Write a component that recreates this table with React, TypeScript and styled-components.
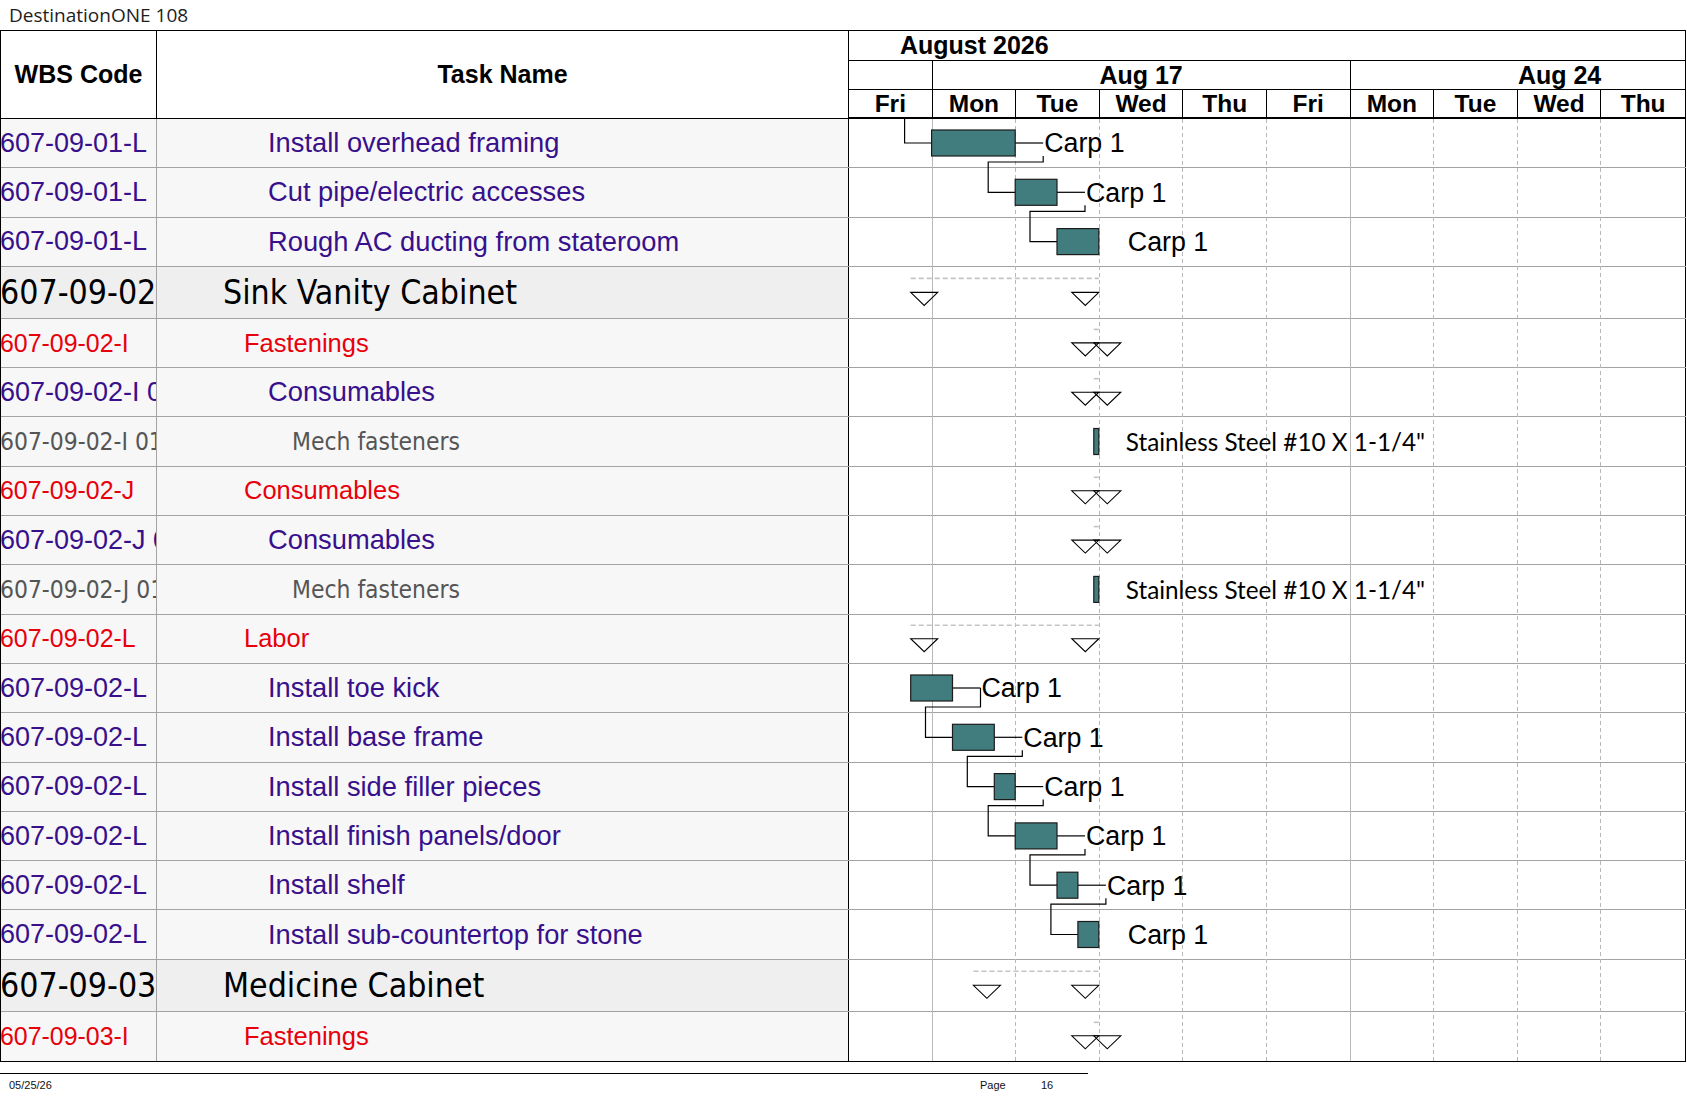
import React from "react";
import styled, { createGlobalStyle } from "styled-components";

const ARIAL = '"Liberation Sans", Arial, sans-serif';
const TAHOMA = '"DejaVu Sans Condensed", "DejaVu Sans", sans-serif';
const CALIBRI = 'Lato, "Open Sans", sans-serif';

const DAY = 83.6;
const ROW_H = 49.3;
const SUM_H = 52;
const CHART_W = 836;

type Level = "summary" | "group" | "task" | "item";

interface Row {
  wbs: string;
  name: string;
  level: Level;
}

const LEVELS: Record<
  Level,
  { color: string; family: string; size: number; wbsSize: number; indent: number; bg: string }
> = {
  summary: { color: "#000", family: TAHOMA, size: 33.6, wbsSize: 33.6, indent: 66, bg: "#efefef" },
  group: { color: "#e8000b", family: ARIAL, size: 25.5, wbsSize: 24.9, indent: 87, bg: "#f7f7f7" },
  task: { color: "#38108c", family: ARIAL, size: 27.3, wbsSize: 27, indent: 111, bg: "#f7f7f7" },
  item: { color: "#555", family: TAHOMA, size: 24.4, wbsSize: 24.4, indent: 135, bg: "#f7f7f7" },
};

const rows: Row[] = [
  { wbs: "607-09-01-L", name: "Install overhead framing", level: "task" },
  { wbs: "607-09-01-L", name: "Cut pipe/electric accesses", level: "task" },
  { wbs: "607-09-01-L", name: "Rough AC ducting from stateroom", level: "task" },
  { wbs: "607-09-02", name: "Sink Vanity Cabinet", level: "summary" },
  { wbs: "607-09-02-I", name: "Fastenings", level: "group" },
  { wbs: "607-09-02-I 01", name: "Consumables", level: "task" },
  { wbs: "607-09-02-I 01 01", name: "Mech fasteners", level: "item" },
  { wbs: "607-09-02-J", name: "Consumables", level: "group" },
  { wbs: "607-09-02-J 01", name: "Consumables", level: "task" },
  { wbs: "607-09-02-J 01 01", name: "Mech fasteners", level: "item" },
  { wbs: "607-09-02-L", name: "Labor", level: "group" },
  { wbs: "607-09-02-L", name: "Install toe kick", level: "task" },
  { wbs: "607-09-02-L", name: "Install base frame", level: "task" },
  { wbs: "607-09-02-L", name: "Install side filler pieces", level: "task" },
  { wbs: "607-09-02-L", name: "Install finish panels/door", level: "task" },
  { wbs: "607-09-02-L", name: "Install shelf", level: "task" },
  { wbs: "607-09-02-L", name: "Install sub-countertop for stone", level: "task" },
  { wbs: "607-09-03", name: "Medicine Cabinet", level: "summary" },
  { wbs: "607-09-03-I", name: "Fastenings", level: "group" },
];

type Bar = { row: number; start: number; end: number; label: string; connector: boolean; material?: boolean };
type Span = { row: number; start: number; end: number };

const STEEL = 'Stainless Steel #10 X 1-1/4"';

const bars: Bar[] = [
  { row: 0, start: 1, end: 2, label: "Carp 1", connector: true },
  { row: 1, start: 2, end: 2.5, label: "Carp 1", connector: true },
  { row: 2, start: 2.5, end: 3, label: "Carp 1", connector: false },
  { row: 6, start: 2.94, end: 3, label: STEEL, connector: false, material: true },
  { row: 9, start: 2.94, end: 3, label: STEEL, connector: false, material: true },
  { row: 11, start: 0.75, end: 1.25, label: "Carp 1", connector: true },
  { row: 12, start: 1.25, end: 1.75, label: "Carp 1", connector: true },
  { row: 13, start: 1.75, end: 2, label: "Carp 1", connector: true },
  { row: 14, start: 2, end: 2.5, label: "Carp 1", connector: true },
  { row: 15, start: 2.5, end: 2.75, label: "Carp 1", connector: true },
  { row: 16, start: 2.75, end: 3, label: "Carp 1", connector: false },
];

const spans: Span[] = [
  { row: 3, start: 0.75, end: 3 },
  { row: 4, start: 2.94, end: 3 },
  { row: 5, start: 2.94, end: 3 },
  { row: 7, start: 2.94, end: 3 },
  { row: 8, start: 2.94, end: 3 },
  { row: 10, start: 0.75, end: 3 },
  { row: 17, start: 1.5, end: 3 },
  { row: 18, start: 2.94, end: 3 },
];

// [from row, to row, line leaves from the bar centre]
const links: [number, number, boolean][] = [
  [0, 1, false],
  [1, 2, false],
  [11, 12, true],
  [12, 13, false],
  [13, 14, false],
  [14, 15, false],
  [15, 16, false],
];

const heights = rows.map((r) => (r.level === "summary" ? SUM_H : ROW_H));
const tops = heights.map((_, i) => heights.slice(0, i).reduce((a, b) => a + b, 0));
const BODY_H = heights.reduce((a, b) => a + b, 0);

const gx = (t: number) => t * DAY - 1;
const isSum = (row: number) => rows[row].level === "summary";
const barCy = (row: number) => tops[row] + 24;
const barOf = (row: number) => bars.find((b) => b.row === row)!;

const DAYS = ["Fri", "Mon", "Tue", "Wed", "Thu", "Fri", "Mon", "Tue", "Wed", "Thu"];

function GanttChart() {
  return (
    <ChartSvg width={CHART_W} height={BODY_H}>
      {DAYS.slice(1).map((_, i) => {
        const d = i + 1;
        const x = Math.round(gx(d)) + 0.5;
        const week = d === 1 || d === 6;
        return (
          <line
            key={d}
            x1={x}
            x2={x}
            y1={0}
            y2={BODY_H}
            stroke="#b8b8b8"
            strokeWidth={1}
            strokeDasharray={week ? undefined : "4 3"}
          />
        );
      })}

      {spans.map((s) => {
        const top = tops[s.row];
        const cy = top + (isSum(s.row) ? 25.5 : 24);
        const ly = top + (isSum(s.row) ? 11.5 : 10.5);
        const sx = gx(s.start);
        const ex = gx(s.end);
        return (
          <g key={s.row}>
            <line x1={sx} x2={ex} y1={ly} y2={ly} stroke="#c4c4c4" strokeWidth={1.6} strokeDasharray="5 3" />
            <path d={`M${ex - 27} ${cy} L${ex} ${cy} L${ex - 13.5} ${cy + 13} Z`} fill="none" stroke="#000" strokeWidth={1.1} />
            <path d={`M${sx} ${cy} L${sx + 27} ${cy} L${sx + 13.5} ${cy + 13} Z`} fill="none" stroke="#000" strokeWidth={1.1} />
          </g>
        );
      })}

      <path
        d={`M${gx(1) - 27} 0 V${barCy(0)} H${gx(1)}`}
        fill="none"
        stroke="#000"
        strokeWidth={1.2}
      />

      {links.map(([from, to, fromCenter]) => {
        const a = barOf(from);
        const b = barOf(to);
        const lx = gx(a.end) + 28;
        const y0 = fromCenter ? barCy(from) : tops[from] + 37;
        const y1 = tops[from] + 43;
        const nx = gx(b.start) - 27;
        return (
          <path
            key={from}
            d={`M${lx} ${y0} V${y1} H${nx} V${barCy(to)} H${gx(b.start)}`}
            fill="none"
            stroke="#000"
            strokeWidth={1.2}
          />
        );
      })}

      {bars.map((b) => {
        const cy = barCy(b.row);
        const x0 = gx(b.start);
        const x1 = gx(b.end);
        return (
          <g key={b.row}>
            {b.connector && (
              <line x1={x1} x2={x1 + 28} y1={cy} y2={cy} stroke="#000" strokeWidth={1.2} />
            )}
            <rect
              x={x0}
              y={tops[b.row] + 11}
              width={x1 - x0}
              height={26}
              fill="#417d7e"
              stroke="#1b1b1b"
              strokeWidth={1.2}
            />
            <text
              x={b.material ? x1 + 27 : x1 + 29}
              y={cy + 9.3}
              fontFamily={b.material ? CALIBRI : ARIAL}
              fontSize={b.material ? 24.3 : 26.8}
              fill="#000"
            >
              {b.label}
            </text>
          </g>
        );
      })}
    </ChartSvg>
  );
}

export default function App() {
  return (
    <Page>
      <GlobalStyle />
      <Title>DestinationONE 108</Title>

      <Sheet>
        <Header>
          <HeadCell>WBS Code</HeadCell>
          <HeadCell>Task Name</HeadCell>
          <Timescale>
            <Tier $h={30}>
              <MonthLabel>August 2026</MonthLabel>
            </Tier>
            <Tier $h={29}>
              <TierCell $w={DAY} />
              <TierCell $w={DAY * 5}>Aug 17</TierCell>
              <TierCell $w={DAY * 5}>Aug 24</TierCell>
            </Tier>
            <Tier $h={28}>
              {DAYS.map((d, i) => (
                <TierCell key={i} $w={DAY} $small>
                  {d}
                </TierCell>
              ))}
            </Tier>
          </Timescale>
        </Header>

        <Body>
          {rows.map((r, i) => (
            <BodyRow key={i} $h={heights[i]}>
              <WbsCell $level={r.level}>
                <CellText>{r.wbs}</CellText>
              </WbsCell>
              <NameCell $level={r.level}>{r.name}</NameCell>
              <ChartCell />
            </BodyRow>
          ))}
          <ChartLayer>
            <GanttChart />
          </ChartLayer>
        </Body>
      </Sheet>

      <Footer>
        <span>05/25/26</span>
        <span>Page</span>
        <span>16</span>
      </Footer>
    </Page>
  );
}

const GlobalStyle = createGlobalStyle`
  html, body {
    margin: 0;
    padding: 0;
    background: #fff;
  }
  body {
    font-family: ${ARIAL};
    color: #000;
  }
`;

const Page = styled.div`
  width: 1687px;
  height: 1097px;
  overflow: hidden;
  background: #fff;
`;

const Title = styled.div`
  height: 30px;
  line-height: 30px;
  padding-left: 9px;
  font-family: "Open Sans", "Noto Sans", sans-serif;
  font-size: 19px;
  color: #1e1e1e;
`;

const Sheet = styled.div`
  width: 1686px;
  box-sizing: border-box;
  border-top: 1px solid #000;
  border-left: 1px solid #000;
  border-bottom: 1px solid #000;
`;

const Header = styled.div`
  display: grid;
  grid-template-columns: 156px 692px 837px;
  height: 88px;
  box-sizing: border-box;
  border-bottom: 1px solid #000;
`;

const HeadCell = styled.div`
  display: flex;
  align-items: center;
  justify-content: center;
  border-right: 1px solid #000;
  font-family: ${ARIAL};
  font-weight: 700;
  font-size: 25px;
  background: #fff;
`;

const Timescale = styled.div`
  display: flex;
  flex-direction: column;
  border-right: 1px solid #000;
  overflow: hidden;
`;

const Tier = styled.div<{ $h: number }>`
  display: flex;
  flex: none;
  height: ${(p) => p.$h}px;
  box-sizing: border-box;
  border-bottom: 1px solid #000;
  overflow: hidden;
`;

const MonthLabel = styled.div`
  padding-left: 51px;
  font-weight: 700;
  font-size: 25px;
  line-height: 29px;
  white-space: nowrap;
`;

const TierCell = styled.div<{ $w: number; $small?: boolean }>`
  flex: none;
  width: ${(p) => p.$w}px;
  box-sizing: border-box;
  border-right: 1px solid #000;
  text-align: center;
  font-weight: 700;
  font-size: ${(p) => (p.$small ? 24.5 : 25)}px;
  line-height: 28px;
  white-space: nowrap;

  &:last-child {
    border-right: none;
  }
`;

const Body = styled.div`
  position: relative;
`;

const BodyRow = styled.div<{ $h: number }>`
  display: grid;
  grid-template-columns: 156px 692px 837px;
  height: ${(p) => p.$h}px;
  box-sizing: border-box;
  border-bottom: 1px solid #a3a3a3;

  &:nth-last-child(2) {
    border-bottom: none;
  }
`;

const WbsCell = styled.div<{ $level: Level }>`
  display: flex;
  align-items: center;
  overflow: hidden;
  white-space: nowrap;
  border-right: 1px solid #a3a3a3;
  background: ${(p) => LEVELS[p.$level].bg};
  color: ${(p) => LEVELS[p.$level].color};
  font-family: ${(p) => LEVELS[p.$level].family};
  font-size: ${(p) => LEVELS[p.$level].wbsSize}px;
`;

const CellText = styled.span`
  margin-left: -1px;
`;

const NameCell = styled.div<{ $level: Level }>`
  display: flex;
  align-items: center;
  overflow: hidden;
  white-space: nowrap;
  padding-left: ${(p) => LEVELS[p.$level].indent}px;
  border-right: 1px solid #000;
  background: ${(p) => LEVELS[p.$level].bg};
  color: ${(p) => LEVELS[p.$level].color};
  font-family: ${(p) => LEVELS[p.$level].family};
  font-size: ${(p) => LEVELS[p.$level].size}px;
`;

const ChartCell = styled.div`
  background: #fff;
  border-right: 1px solid #000;
`;

const ChartLayer = styled.div`
  position: absolute;
  left: 848px;
  top: 0;
  width: ${CHART_W}px;
  height: 100%;
  pointer-events: none;
`;

const ChartSvg = styled.svg`
  display: block;
  overflow: visible;
`;

const Footer = styled.div`
  margin-top: 11px;
  width: 1088px;
  box-sizing: border-box;
  border-top: 1px solid #000;
  display: grid;
  grid-template-columns: 971px 61px auto;
  padding: 5px 0 0 9px;
  font-family: ${ARIAL};
  font-size: 11px;
  line-height: 13px;
  color: #111;
`;
